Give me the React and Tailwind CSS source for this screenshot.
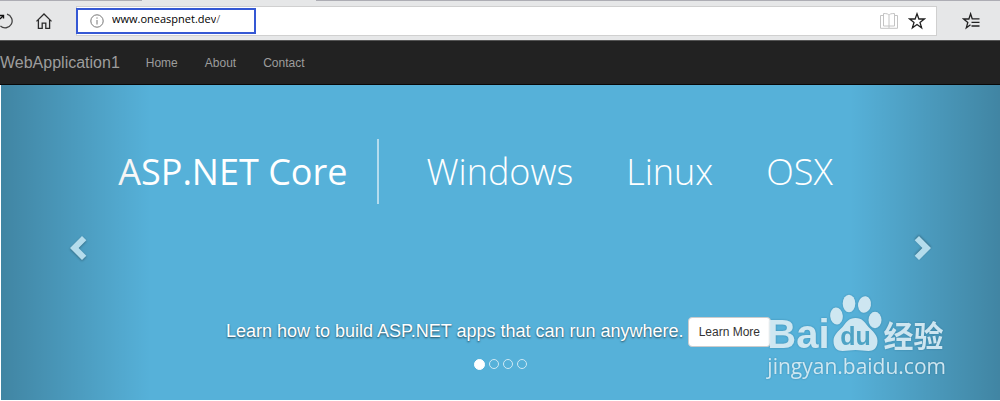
import React, { useState } from "react";

/* ---------- DATA ---------- */

const navLinks = ["Home", "About", "Contact"];

const platforms = ["Windows", "Linux", "OSX"];

/* ---------- ICONS ---------- */

const RefreshIcon = () => (
  <svg
    className="h-5 w-5"
    viewBox="0 0 20 20"
    fill="none"
    stroke="#444"
    strokeWidth="1.3"
  >
    <path d="M11 3.100A7 7 0 1 1 4.400 15" />
    <path d="M3.500 4.500h4v3" stroke="#111" strokeWidth="1.400" />
    <path d="M7.500 4.500 4 8" stroke="#111" />
  </svg>
);

const HomeIcon = () => (
  <svg
    className="h-4 w-4"
    viewBox="0 0 16 16"
    fill="none"
    stroke="#2b2b2b"
    strokeWidth="1.3"
  >
    <path d="M0.5 8.4 8 1l7.5 7.4" />
    <path d="M2.4 7v8.3h3.8V10.2h3.6v5.1h3.8V7" />
  </svg>
);

const InfoIcon = () => (
  <svg
    className="h-[14px] w-[14px] shrink-0"
    viewBox="0 0 14 14"
    fill="none"
    stroke="#777"
  >
    <circle cx="7" cy="7" r="6.2" />
    <path d="M7 6v4.5M7 3.4v1.3" />
  </svg>
);

const BookIcon = () => (
  <svg
    className="h-[18px] w-[18px]"
    viewBox="0 0 18 18"
    fill="none"
    stroke="#c4c4c4"
  >
    <path d="M9 3.2C8.500 2 7 1.500 3.500 1.500v12.500H9zM9 3.200C9.500 2 11 1.500 14.500 1.500v12.500H9" />
    <path d="M3.500 3.500h-3v12.800h17V3.500h-3M9 14v2" />
  </svg>
);

const StarIcon = () => (
  <svg
    className="h-[18px] w-[18px]"
    viewBox="0 0 18 18"
    fill="none"
    stroke="#222"
    strokeWidth="1.3"
  >
    <path d="M9 1.800 10.900 7h5.400l-4.300 3.400 1.600 5.400L9 12.500l-4.600 3.300L6 10.400 1.700 7h5.400z" />
  </svg>
);

const FavoritesIcon = () => (
  <svg
    className="h-[18px] w-[18px]"
    viewBox="0 0 18 18"
    fill="none"
    stroke="#222"
    strokeWidth="1.3"
  >
    <path d="M17.500 6.800H10.200L8.600 1.800 6.900 7H1.600l4.200 3.400-1.500 5.400 4.200-3" />
    <path d="M9.500 10.400h8M9.500 14h8" />
  </svg>
);

const Chevron = ({ flip }) => (
  <svg
    className={`h-[26px] w-[18px] drop-shadow-[0_1px_1px_rgba(0,0,0,0.3)] ${
      flip ? "rotate-180" : ""
    }`}
    viewBox="0 0 18 26"
    fill="#b4dcec"
  >
    <path d="M13 1 17.300 5.300 9.600 13l7.700 7.700L13 25 1 13z" />
  </svg>
);

/* ---------- BROWSER BAR ---------- */

const BrowserBar = () => (
  <header className="bg-[#e6e7e8]">
    <div className="flex h-px">
      <div className="w-[142px] bg-[#adadb4]" />
      <div className="w-[174px]" />
      <div className="flex-1 bg-[#adadb4]" />
    </div>
    <div className="flex h-[39px] items-center">
      <button type="button" aria-label="Refresh" className="-ml-1 mr-5">
        <RefreshIcon />
      </button>
      <button type="button" aria-label="Home" className="mr-6">
        <HomeIcon />
      </button>
      <div className="flex h-[30px] flex-1 items-center border border-[#d0d0d0] bg-white pr-[10px]">
        <div className="-ml-px flex h-[26px] w-[180px] items-center gap-2 border-2 border-[#3558d4] pl-3">
          <InfoIcon />
          <div className="flex items-center pb-1 font-['Open_Sans',sans-serif] text-[11px] leading-4">
            <input
              type="text"
              aria-label="Address"
              defaultValue="www.oneaspnet.dev"
              className="field-sizing-content text-black outline-none"
            />
            <span className="text-[#777]">/</span>
          </div>
        </div>
        <div className="ml-auto flex items-center gap-[10px]">
          <button type="button" aria-label="Reading view">
            <BookIcon />
          </button>
          <button type="button" aria-label="Add to favorites">
            <StarIcon />
          </button>
        </div>
      </div>
      <button type="button" aria-label="Favorites" className="mr-5 ml-[25px]">
        <FavoritesIcon />
      </button>
    </div>
  </header>
);

/* ---------- NAVBAR ---------- */

const Navbar = () => (
  <nav className="flex h-[45px] items-center border-y border-t-[#555] border-b-[#080808] bg-[#222] text-[#9d9d9d]">
    <a href="#" className="mr-[26px] text-base">
      WebApplication1
    </a>
    <div className="flex gap-[27px] text-xs">
      {navLinks.map((link) => (
        <a key={link} href="#">
          {link}
        </a>
      ))}
    </div>
  </nav>
);

/* ---------- WATERMARK ---------- */

const Watermark = () => (
  <div className="absolute top-[205px] right-[54px] text-[#d5eaf3] opacity-95 drop-shadow-[0_0_1px_rgba(0,60,90,0.3)]">
    <div className="flex h-[62px] items-end font-['Liberation_Sans',sans-serif] font-bold">
      <span className="text-[40px] leading-9">Bai</span>
      <div className="relative h-[58px] w-[52px]">
        <svg className="h-[58px] w-[52px]" viewBox="0 0 52 58" fill="#d5eaf3">
          <ellipse cx="6.500" cy="22" rx="6.300" ry="8.500" transform="rotate(-6 6.500 22)" />
          <ellipse cx="19" cy="9.500" rx="6.300" ry="8.800" />
          <ellipse cx="34.500" cy="10.500" rx="6.500" ry="8.300" transform="rotate(10 34.500 10.500)" />
          <ellipse cx="45" cy="26" rx="6.500" ry="8.300" />
          <path d="M25.500 24c7 0 9 4 13 9 4 4 9 8 9 14 0 7-4 10-9 10-5 0-8-1-13-1s-8 1-13 1c-5 0-9-3-9-10 0-6 5-10 9-14 4-5 6-9 13-9z" />
        </svg>
        <span className="absolute inset-x-0 bottom-1 text-center text-[25px] leading-6 text-[#4ea3c4]">
          du
        </span>
      </div>
      <span className="ml-[2px] font-['Noto_Sans_CJK_SC',sans-serif] text-[30px] leading-9">
        经验
      </span>
    </div>
    <p className="font-['Open_Sans',sans-serif] text-[21px] leading-7">
      jingyan.baidu.com
    </p>
  </div>
);

/* ---------- CAROUSEL ---------- */

const Carousel = () => {
  const [active, setActive] = useState(0);

  const move = (step) => setActive((prev) => (prev + step + 4) % 4);

  return (
    <section className="relative ml-px bg-[#56b1d9] pt-[54px] pb-[30px] text-white">
      {/* SLIDE */}
      <div className="flex items-center justify-center pr-[50px] font-['Open_Sans',sans-serif] text-[36px] leading-[65px] font-light">
        <h1 className="font-normal">ASP.NET Core</h1>
        <div className="mr-[47px] ml-[30px] h-[65px] w-[2px] bg-[#b5dcee]" />
        <ul className="flex gap-[53px]">
          {platforms.map((name) => (
            <li key={name}>{name}</li>
          ))}
        </ul>
      </div>

      {/* CAPTION */}
      <div className="mt-[113px] flex items-start justify-center gap-1 pr-1">
        <p className="text-[18px] leading-7 [text-shadow:0_1px_2px_rgba(0,0,0,0.6)]">
          Learn how to build ASP.NET apps that can run anywhere.
        </p>
        <a
          href="#"
          className="rounded border border-[#ccc] bg-white px-[10px] py-1 text-xs leading-5 text-[#333]"
        >
          Learn More
        </a>
      </div>

      {/* INDICATORS */}
      <div className="mt-[11px] flex h-3 items-center justify-center gap-1">
        {[0, 1, 2, 3].map((i) => (
          <button
            key={i}
            type="button"
            aria-label={`Slide ${i + 1}`}
            onClick={() => setActive(i)}
            className={`rounded-full border ${
              i === active
                ? "h-[11px] w-[11px] border-white bg-white"
                : "h-[10px] w-[10px] border-[#cfe9f4]"
            }`}
          />
        ))}
      </div>

      {/* ARROWS */}
      <button
        type="button"
        aria-label="Previous"
        onClick={() => move(-1)}
        className="absolute inset-y-0 left-0 flex w-[15%] items-center justify-center bg-linear-to-r from-black/25 to-transparent pt-[10px] pl-1"
      >
        <Chevron />
      </button>
      <button
        type="button"
        aria-label="Next"
        onClick={() => move(1)}
        className="absolute inset-y-0 right-0 flex w-[15%] items-center justify-center bg-linear-to-l from-black/25 to-transparent pt-[10px] pr-1"
      >
        <Chevron flip />
      </button>

      <Watermark />
    </section>
  );
};

/* ---------- MAIN ---------- */

const App = () => (
  <div className="bg-white font-['Liberation_Sans',Arial,sans-serif]">
    <BrowserBar />
    <Navbar />
    <Carousel />
  </div>
);

export default App;
